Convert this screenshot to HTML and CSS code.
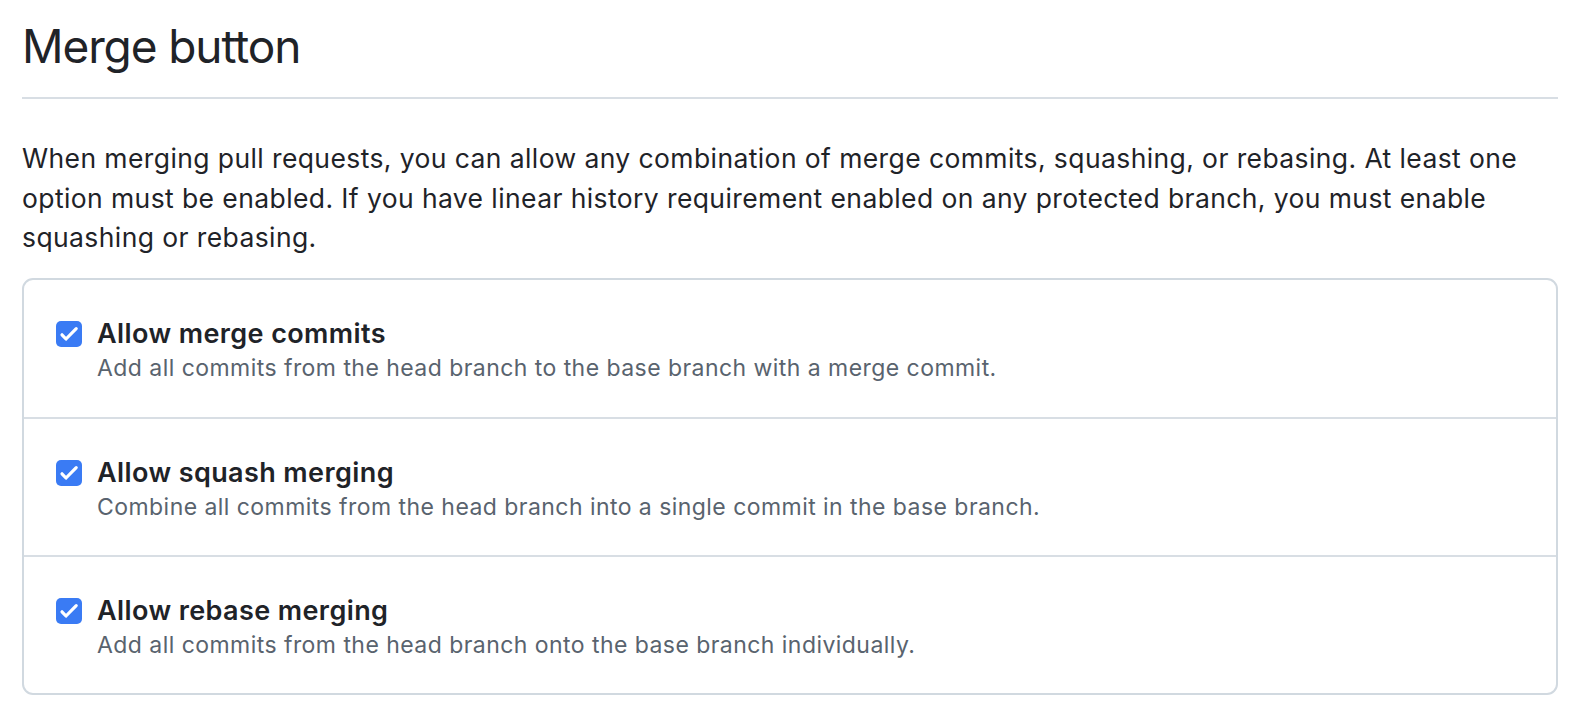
FILE: index.html
```html
<!DOCTYPE html>
<html>
<head>
<meta charset="utf-8">
<link rel="stylesheet" href="styles.css">
</head>
<body>
<div class="page">
  <h2 class="title">Merge button</h2>
  <p class="intro">When merging pull requests, you can allow any combination of merge commits, squashing, or rebasing. At least one option must be enabled. If you have linear history requirement enabled on any protected branch, you must enable squashing or rebasing.</p>
  <div class="box">
    <div class="row">
      <span class="check"><svg viewBox="0 0 26 26" width="26" height="26"><path d="M6 13.8 10 18 20.2 7.6" fill="none" stroke="#fff" stroke-width="3.2" stroke-linecap="round" stroke-linejoin="round"/></svg></span>
      <div class="text">
        <div class="label">Allow merge commits</div>
        <div class="desc">Add all commits from the head branch to the base branch with a merge commit.</div>
      </div>
    </div>
    <div class="row">
      <span class="check"><svg viewBox="0 0 26 26" width="26" height="26"><path d="M6 13.8 10 18 20.2 7.6" fill="none" stroke="#fff" stroke-width="3.2" stroke-linecap="round" stroke-linejoin="round"/></svg></span>
      <div class="text">
        <div class="label">Allow squash merging</div>
        <div class="desc">Combine all commits from the head branch into a single commit in the base branch.</div>
      </div>
    </div>
    <div class="row">
      <span class="check"><svg viewBox="0 0 26 26" width="26" height="26"><path d="M6 13.8 10 18 20.2 7.6" fill="none" stroke="#fff" stroke-width="3.2" stroke-linecap="round" stroke-linejoin="round"/></svg></span>
      <div class="text">
        <div class="label">Allow rebase merging</div>
        <div class="desc">Add all commits from the head branch onto the base branch individually.</div>
      </div>
    </div>
  </div>
</div>
</body>
</html>
```

FILE: styles.css
```css
html, body {
  margin: 0;
  padding: 0;
  background: #ffffff;
}
body {
  font-family: Inter, "Noto Sans", sans-serif;
  color: #1f2328;
}
.page {
  width: 1536px;
  margin-left: 22px;
}
.title {
  margin: 0;
  padding-top: 16px;
  padding-bottom: 20px;
  font-size: 46px;
  line-height: 61px;
  font-weight: 400;
  letter-spacing: -1.1px;
  border-bottom: 2px solid #d8dee4;
}
.intro {
  margin: 40px 0 0 0;
  font-size: 26.5px;
  line-height: 39.5px;
  letter-spacing: 0.4px;
}
.box {
  margin-top: 20px;
  border: 2px solid #d1d9e0;
  border-radius: 11px;
}
.row {
  display: flex;
  align-items: flex-start;
  gap: 15px;
  padding: 39px 32px 0 32px;
  height: 97px;
  border-top: 2px solid #d8dee4;
}
.row:first-child {
  border-top: none;
  height: 98px;
}
.check {
  flex: none;
  width: 26px;
  height: 26px;
  margin-top: 2px;
  background: #3a7bf4;
  border-radius: 5px;
  display: flex;
}
.label {
  font-size: 27px;
  line-height: 30px;
  font-weight: 600;
  letter-spacing: 0.4px;
  color: #1f2328;
}
.desc {
  margin-top: 4px;
  font-size: 23px;
  line-height: 30px;
  letter-spacing: 0.45px;
  color: #59636e;
}
```
